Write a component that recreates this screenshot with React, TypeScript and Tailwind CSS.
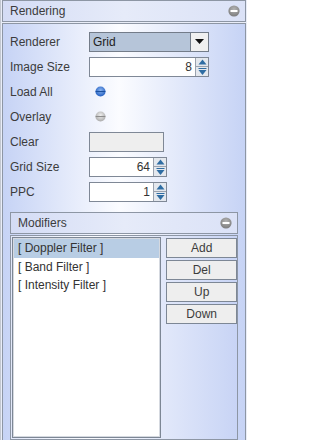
import React from 'react';

const font = { fontFamily: '"Liberation Sans", Arial, sans-serif' };

function CollapseIcon() {
  return (
    <svg width="12" height="12" viewBox="0 0 12 12">
      <defs>
        <radialGradient id="cg" cx="50%" cy="35%" r="65%">
          <stop offset="0%" stopColor="#b4b4b4" />
          <stop offset="100%" stopColor="#7c7c7c" />
        </radialGradient>
      </defs>
      <circle cx="6" cy="6" r="5.6" fill="url(#cg)" />
      <rect x="2.5" y="5" width="7" height="2" fill="#ffffff" />
    </svg>
  );
}

function Header({ title }: { title: string }) {
  return (
    <div className="flex h-[22px] items-center justify-between border border-[#8d96a4] bg-[linear-gradient(to_right,#d4dcf5,#e6ebf9_50%,#dbe2f7)] pl-[7px] pr-[5px] text-[12px] text-[#3c3c3c]">
      <span>{title}</span>
      <CollapseIcon />
    </div>
  );
}

function SpinArrows() {
  return (
    <div className="flex w-[13px] flex-col border-l border-[#9aa2ae] bg-[#e4e8ee]">
      <div className="flex h-1/2 items-center justify-center border-b border-[#9aa2ae]">
        <svg width="9" height="6" viewBox="0 0 9 6">
          <path d="M4.5 0.5 L8.5 5.5 L0.5 5.5 Z" fill="#2f6da3" />
        </svg>
      </div>
      <div className="flex h-1/2 flex-col items-center justify-center">
        <svg width="9" height="7" viewBox="0 0 9 7">
          <rect x="0.5" y="0" width="8" height="1" fill="#2f6da3" />
          <path d="M0.5 2 L8.5 2 L4.5 7 Z" fill="#2f6da3" />
        </svg>
      </div>
    </div>
  );
}

function Spinner({ value, width }: { value: string; width: string }) {
  return (
    <div className={`flex h-[20px] border border-[#7f8896] bg-white ${width}`}>
      <div className="flex-1 pr-[3px] text-right text-[12px] leading-[18px] text-[#333]">{value}</div>
      <SpinArrows />
    </div>
  );
}

function Row({ label, children }: { label: string; children?: React.ReactNode }) {
  return (
    <div className="flex h-[25px] items-center">
      <div className="w-[79px] text-[12px] text-[#3c3c3c]">{label}</div>
      {children}
    </div>
  );
}

function Radio({ on }: { on: boolean }) {
  return (
    <svg width="11" height="11" viewBox="0 0 10 10" className="ml-[6px]">
      <defs>
        <radialGradient id="rb" cx="50%" cy="40%" r="60%">
          <stop offset="0%" stopColor="#8fb8f2" />
          <stop offset="100%" stopColor="#1f5cc0" />
        </radialGradient>
        <radialGradient id="rg" cx="50%" cy="40%" r="60%">
          <stop offset="0%" stopColor="#f2f2f2" />
          <stop offset="100%" stopColor="#a9a9a9" />
        </radialGradient>
      </defs>
      <circle cx="5" cy="5" r="4.6" fill={on ? 'url(#rb)' : 'url(#rg)'} />
      <rect x="0.6" y="4.5" width="8.8" height="1" fill={on ? '#1a4f9e' : '#8c8c8c'} />
    </svg>
  );
}

export default function App() {
  const items = ['[ Doppler Filter ]', '[ Band Filter ]', '[ Intensity Filter ]'];
  const buttons = ['Add', 'Del', 'Up', 'Down'];

  return (
    <div
      className="flex h-[440px] w-[247px] flex-col overflow-hidden border-l border-[#c2c7d0] bg-[#e9edf8] pl-[1px] pr-[1px] pt-0"
      style={font}
    >
      <Header title="Rendering" />
      <div className="mt-[1px] flex flex-1 flex-col border border-b-0 border-[#8d96a4] bg-[linear-gradient(to_right,#c6d3f5,#fbfcff_48%,#c6d3f5)] px-[7px] pt-[5px]">
        <Row label="Renderer">
          <div className="flex h-[20px] w-[120px] border border-[#737c89]">
            <div className="flex-1 bg-[#b6c5d9] pl-[3px] text-[12px] leading-[18px] text-[#222]">Grid</div>
            <div className="flex w-[18px] items-center justify-center border-l border-[#737c89] bg-[#f0f0f0]">
              <svg width="9" height="5" viewBox="0 0 9 5">
                <path d="M0 0 L9 0 L4.5 5 Z" fill="#111" />
              </svg>
            </div>
          </div>
        </Row>
        <Row label="Image Size">
          <Spinner value="8" width="w-[120px]" />
        </Row>
        <Row label="Load All">
          <Radio on />
        </Row>
        <Row label="Overlay">
          <Radio on={false} />
        </Row>
        <Row label="Clear">
          <div className="h-[20px] w-[75px] border border-[#7f8896] bg-[#eeeeee]" />
        </Row>
        <Row label="Grid Size">
          <Spinner value="64" width="w-[78px]" />
        </Row>
        <Row label="PPC">
          <Spinner value="1" width="w-[78px]" />
        </Row>

        <div className="mt-[8px] flex flex-1 flex-col">
          <Header title="Modifiers" />
          <div className="mt-[1px] flex flex-1 gap-[5px] border border-[#8d96a4] bg-[linear-gradient(to_right,#e2e8fa,#fbfcff_35%,#c8d4f5)] pb-[1px] pl-[1px] pr-0 pt-[1px]">
            <div className="w-[150px] border border-[#7d8795] bg-white p-[1px] shadow-[inset_0_0_0_1px_#d5d9e0]">
              {items.map((it, i) => (
                <div
                  key={it}
                  className={`h-[18.5px] pl-[4px] text-[12px] leading-[18px] text-[#333] ${i === 0 ? 'bg-[#b8cde4]' : ''}`}
                >
                  {it}
                </div>
              ))}
            </div>
            <div className="flex w-[71px] flex-col gap-[2px] pt-[1px]">
              {buttons.map((b) => (
                <div
                  key={b}
                  className="flex h-[20px] items-center justify-center border border-[#7d8795] bg-[#eeeeee] text-[12px] text-[#3c3c3c]"
                >
                  {b}
                </div>
              ))}
            </div>
          </div>
        </div>
      </div>
    </div>
  );
}
